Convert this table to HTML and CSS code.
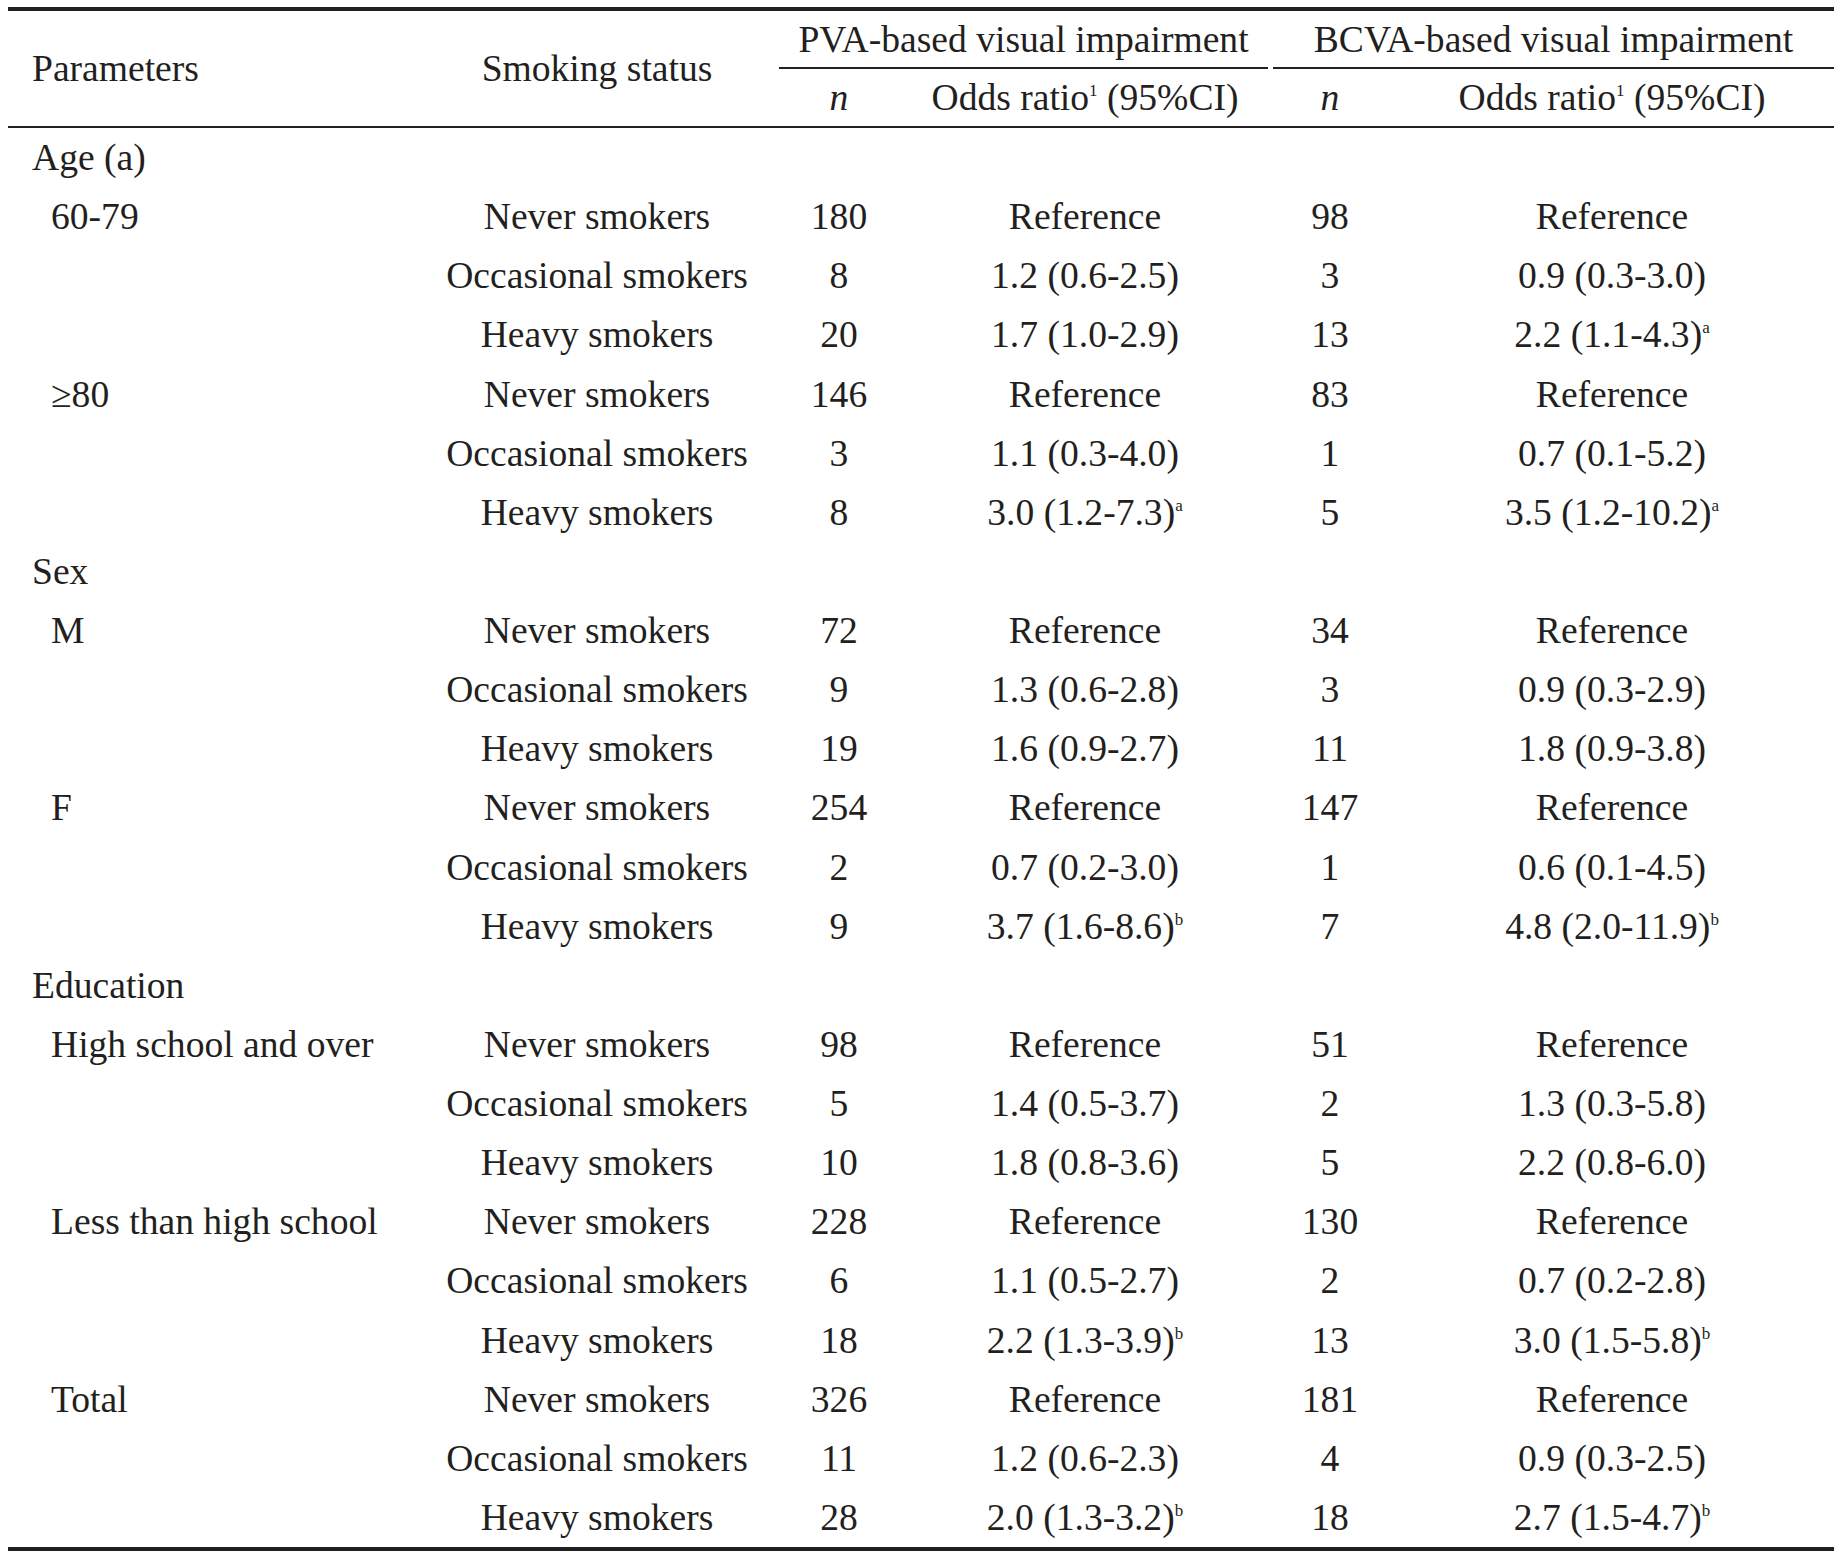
FILE: index.html
```html
<!DOCTYPE html>
<html lang="en">
<head>
<meta charset="utf-8">
<title>Smoking status and visual impairment</title>
<link rel="stylesheet" href="styles.css">
</head>
<body>
<div class="page">
<table class="ortable">
  <colgroup>
    <col class="col-param">
    <col class="col-status">
    <col class="col-n1">
    <col class="col-or1">
    <col class="col-n2">
    <col class="col-or2">
  </colgroup>
  <thead>
    <tr class="h1">
      <th rowspan="2" class="span-hd param">Parameters</th>
      <th rowspan="2" class="span-hd">Smoking status</th>
      <th colspan="2" class="grp"><div class="grp-label grp-pva">PVA-based visual impairment</div></th>
      <th colspan="2" class="grp"><div class="grp-label grp-bcva">BCVA-based visual impairment</div></th>
    </tr>
    <tr class="h2">
      <th><i>n</i></th>
      <th>Odds ratio<sup>1</sup> (95%CI)</th>
      <th><i>n</i></th>
      <th>Odds ratio<sup>1</sup> (95%CI)</th>
    </tr>
  </thead>
  <tbody>
    <tr><td class="param">Age (a)</td><td></td><td></td><td></td><td></td><td></td></tr>
    <tr><td class="param sub">60-79</td><td>Never smokers</td><td>180</td><td>Reference</td><td>98</td><td>Reference</td></tr>
    <tr><td class="param sub"></td><td>Occasional smokers</td><td>8</td><td>1.2 (0.6-2.5)</td><td>3</td><td>0.9 (0.3-3.0)</td></tr>
    <tr><td class="param sub"></td><td>Heavy smokers</td><td>20</td><td>1.7 (1.0-2.9)</td><td>13</td><td>2.2 (1.1-4.3)<sup>a</sup></td></tr>
    <tr><td class="param sub">&ge;80</td><td>Never smokers</td><td>146</td><td>Reference</td><td>83</td><td>Reference</td></tr>
    <tr><td class="param sub"></td><td>Occasional smokers</td><td>3</td><td>1.1 (0.3-4.0)</td><td>1</td><td>0.7 (0.1-5.2)</td></tr>
    <tr><td class="param sub"></td><td>Heavy smokers</td><td>8</td><td>3.0 (1.2-7.3)<sup>a</sup></td><td>5</td><td>3.5 (1.2-10.2)<sup>a</sup></td></tr>
    <tr><td class="param">Sex</td><td></td><td></td><td></td><td></td><td></td></tr>
    <tr><td class="param sub">M</td><td>Never smokers</td><td>72</td><td>Reference</td><td>34</td><td>Reference</td></tr>
    <tr><td class="param sub"></td><td>Occasional smokers</td><td>9</td><td>1.3 (0.6-2.8)</td><td>3</td><td>0.9 (0.3-2.9)</td></tr>
    <tr><td class="param sub"></td><td>Heavy smokers</td><td>19</td><td>1.6 (0.9-2.7)</td><td>11</td><td>1.8 (0.9-3.8)</td></tr>
    <tr><td class="param sub">F</td><td>Never smokers</td><td>254</td><td>Reference</td><td>147</td><td>Reference</td></tr>
    <tr><td class="param sub"></td><td>Occasional smokers</td><td>2</td><td>0.7 (0.2-3.0)</td><td>1</td><td>0.6 (0.1-4.5)</td></tr>
    <tr><td class="param sub"></td><td>Heavy smokers</td><td>9</td><td>3.7 (1.6-8.6)<sup>b</sup></td><td>7</td><td>4.8 (2.0-11.9)<sup>b</sup></td></tr>
    <tr><td class="param">Education</td><td></td><td></td><td></td><td></td><td></td></tr>
    <tr><td class="param sub">High school and over</td><td>Never smokers</td><td>98</td><td>Reference</td><td>51</td><td>Reference</td></tr>
    <tr><td class="param sub"></td><td>Occasional smokers</td><td>5</td><td>1.4 (0.5-3.7)</td><td>2</td><td>1.3 (0.3-5.8)</td></tr>
    <tr><td class="param sub"></td><td>Heavy smokers</td><td>10</td><td>1.8 (0.8-3.6)</td><td>5</td><td>2.2 (0.8-6.0)</td></tr>
    <tr><td class="param sub">Less than high school</td><td>Never smokers</td><td>228</td><td>Reference</td><td>130</td><td>Reference</td></tr>
    <tr><td class="param sub"></td><td>Occasional smokers</td><td>6</td><td>1.1 (0.5-2.7)</td><td>2</td><td>0.7 (0.2-2.8)</td></tr>
    <tr><td class="param sub"></td><td>Heavy smokers</td><td>18</td><td>2.2 (1.3-3.9)<sup>b</sup></td><td>13</td><td>3.0 (1.5-5.8)<sup>b</sup></td></tr>
    <tr><td class="param sub">Total</td><td>Never smokers</td><td>326</td><td>Reference</td><td>181</td><td>Reference</td></tr>
    <tr><td class="param sub"></td><td>Occasional smokers</td><td>11</td><td>1.2 (0.6-2.3)</td><td>4</td><td>0.9 (0.3-2.5)</td></tr>
    <tr class="last"><td class="param sub"></td><td>Heavy smokers</td><td>28</td><td>2.0 (1.3-3.2)<sup>b</sup></td><td>18</td><td>2.7 (1.5-4.7)<sup>b</sup></td></tr>
  </tbody>
</table>
</div>
</body>
</html>
```
FILE: styles.css
```css
html, body {
  margin: 0;
  padding: 0;
  background: #ffffff;
}

.page {
  padding: 7px 6px 0 8px;
}

.ortable {
  border-collapse: separate;
  border-spacing: 0;
  table-layout: fixed;
  width: 1826px;
  font-family: "Liberation Serif", "Times New Roman", serif;
  font-size: 37.6px;
  color: #231f20;
}

.col-param { width: 408px; }
.col-status { width: 362px; }
.col-n1 { width: 122px; }
.col-or1 { width: 370px; }
.col-n2 { width: 120px; }
.col-or2 { width: 444px; }

.ortable th,
.ortable td {
  padding: 0;
  font-weight: normal;
  text-align: center;
  white-space: nowrap;
  vertical-align: middle;
}

.ortable i {
  font-style: italic;
}

.ortable sup {
  font-size: 17px;
  line-height: 0;
  vertical-align: 14px;
}

.h1 th {
  border-top: 4px solid #231f20;
}

.span-hd {
  line-height: 57px;
  border-bottom: 2px solid #231f20;
}

.grp-label {
  padding-top: 2px;
  line-height: 54px;
  border-bottom: 2px solid #231f20;
}

.grp-pva {
  margin: 0 2px 0 1px;
}

.grp-bcva {
  margin: 0 0 0 3px;
}

.h2 th {
  line-height: 57px;
  border-bottom: 2px solid #231f20;
}

.ortable td {
  line-height: 59.13px;
}

.ortable .param {
  text-align: left;
  padding-left: 24px;
}

.ortable .sub {
  padding-left: 43px;
}

.last td {
  border-bottom: 4px solid #231f20;
}
```
